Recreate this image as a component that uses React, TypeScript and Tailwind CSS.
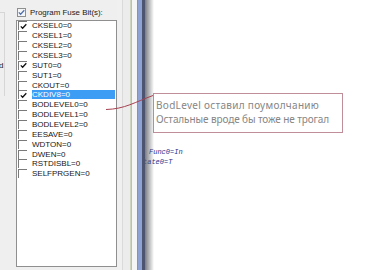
import React from "react";

const items: { label: string; checked: boolean; selected?: boolean }[] = [
  { label: "CKSEL0=0", checked: true },
  { label: "CKSEL1=0", checked: false },
  { label: "CKSEL2=0", checked: false },
  { label: "CKSEL3=0", checked: false },
  { label: "SUT0=0", checked: true },
  { label: "SUT1=0", checked: false },
  { label: "CKOUT=0", checked: false },
  { label: "CKDIV8=0", checked: true, selected: true },
  { label: "BODLEVEL0=0", checked: false },
  { label: "BODLEVEL1=0", checked: false },
  { label: "BODLEVEL2=0", checked: false },
  { label: "EESAVE=0", checked: false },
  { label: "WDTON=0", checked: false },
  { label: "DWEN=0", checked: false },
  { label: "RSTDISBL=0", checked: false },
  { label: "SELFPRGEN=0", checked: false },
];

function Tick({ color }: { color: string }) {
  return (
    <svg width="7" height="7" viewBox="0 0 7 7" className="block">
      <path d="M0.8 3.4 L2.6 5.3 L6.3 1.2" fill="none" stroke={color} strokeWidth="1.3" />
    </svg>
  );
}

function ListCheck({ checked }: { checked: boolean }) {
  return (
    <div className="w-[9px] h-[9px] shrink-0 bg-white border-t border-l border-[#7a7a7a] border-b-[#dedede] border-r-[#dedede] flex items-center justify-center">
      {checked && <Tick color="#111" />}
    </div>
  );
}

export default function App() {
  return (
    <div
      className="relative w-[374px] h-[270px] overflow-hidden flex bg-white"
      style={{ fontFamily: '"Liberation Sans", Arial, sans-serif' }}
    >
      {/* Left dialog panel */}
      <div className="w-[137px] h-full flex bg-[#efefef]">
        {/* groupbox fragment */}
        <div className="w-[16px] h-full flex flex-col">
          <div className="mt-[12px] w-[5px] h-[84px] border-t border-r border-[#d6d6d6] pt-[49px]">
            <div className="ml-[-1px] text-[8px] leading-[8px] text-[#1a1a1a]">d</div>
          </div>
        </div>
        {/* fuse list column */}
        <div className="w-[101px] h-full flex flex-col pt-[8px]">
          <div className="h-[9px] flex items-center gap-[4px] ml-[1px]">
            <div className="w-[9px] h-[9px] border border-[#8e8f8f] bg-[#f4f6f8] flex items-center justify-center">
              <Tick color="#5371a8" />
            </div>
            <span className="text-[7.9px] leading-[9px] text-[#1a1a1a] whitespace-nowrap">Program Fuse Bit(s):</span>
          </div>
          <div className="mt-[3px] h-[247px] border border-[#8f8f8f] bg-white flex flex-col">
            {items.map((it) => (
              <div key={it.label} className="h-[9.87px] flex items-center">
                <div className="ml-[1px]">
                  <ListCheck checked={it.checked} />
                </div>
                <div
                  className={
                    it.selected
                      ? "ml-[5px] flex-1 mr-[1px] h-[9px] bg-[#3d9df5] text-white text-[8px] leading-[9px] whitespace-nowrap"
                      : "ml-[5px] flex-1 text-[#161616] text-[8px] leading-[9px] whitespace-nowrap"
                  }
                >
                  {it.label}
                </div>
              </div>
            ))}
          </div>
        </div>
        {/* splitter stripes */}
        <div className="w-[20px] h-full flex">
          <div className="w-[5px] h-full bg-[#f0f0f0]" />
          <div className="w-[1px] h-full bg-[#dadada]" />
          <div className="w-[7px] h-full bg-[#ececec]" />
          <div className="w-[1px] h-full bg-[#cdd5bf]" />
          <div className="w-[1px] h-full bg-[#bdbdbd]" />
          <div className="w-[5px] h-full bg-[#f5f5f5]" />
        </div>
      </div>
      {/* blue border */}
      <div className="w-[5px] h-full bg-[#8ea3d4] border-l border-[#7d93c6]" />
      {/* editor area */}
      <div className="relative flex-1 h-full bg-white">
        <div className="ml-[11px] mt-[93px] w-[190px] h-[40px] border border-[#c08e98] bg-white pt-[4px] pl-[2px]">
          <div
            className="text-[10px] leading-[14px] text-[#868686] whitespace-nowrap"
            style={{ fontFamily: '"Noto Sans", "Open Sans", sans-serif' }}
          >
            <div className="tracking-[0.3px]">BodLevel оставил поумолчанию</div>
            <div className="tracking-[-0.1px]">Остальные вроде бы тоже не трогал</div>
          </div>
        </div>
        <div
          className="mt-[14px] text-[7px] leading-[10px] italic text-[#27308c] whitespace-pre"
          style={{ fontFamily: '"Liberation Mono", "Courier New", monospace' }}
        >
          <div className="pl-[7px]">Func0=In</div>
          <div className="pl-[1px]">tate0=T</div>
        </div>
        {/* window shadow overlay */}
        <div className="absolute left-0 top-0 h-full w-[12px] flex">
          <div className="w-[3px] h-full bg-[#4c5470]" />
          <div className="flex-1 h-full bg-gradient-to-r from-[rgba(90,92,100,0.8)] to-[rgba(255,255,255,0)]" />
        </div>
      </div>
      {/* connector line */}
      <svg className="absolute left-[100px] top-[88px]" width="60" height="30" viewBox="0 0 60 30">
        <path d="M6 21.5 C 25 21, 35 14, 53 7.5" fill="none" stroke="#a8404f" strokeWidth="1" />
      </svg>
    </div>
  );
}
